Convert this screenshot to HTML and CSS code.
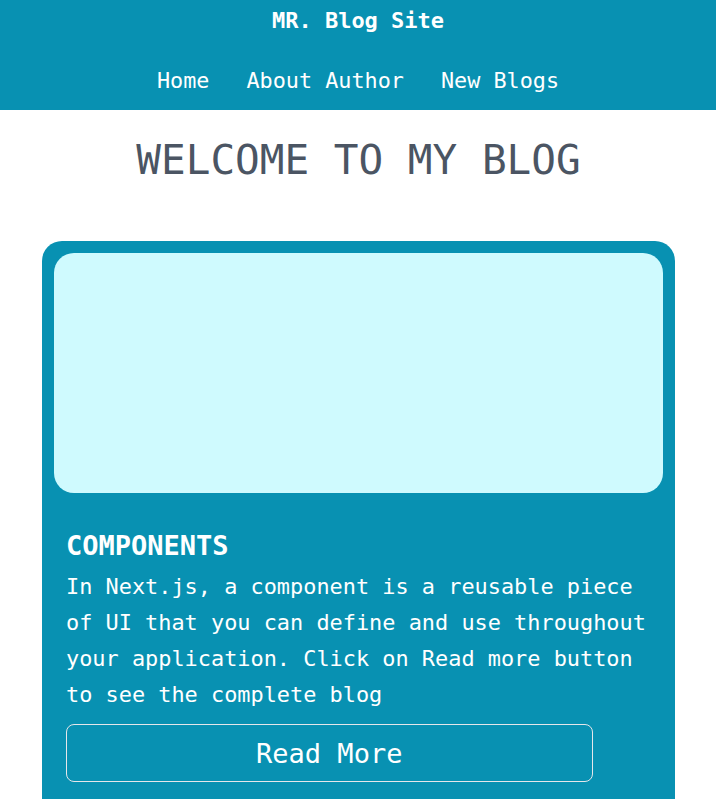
FILE: index.html
```html
<!DOCTYPE html>
<html lang="en">
<head>
<meta charset="utf-8">
<title>MR. Blog Site</title>
<link rel="stylesheet" href="styles.css">
</head>
<body>
<header class="site-header">
  <div class="brand">MR. Blog Site</div>
  <nav class="nav">
    <a class="nav-link" href="#">Home</a>
    <a class="nav-link" href="#">About Author</a>
    <a class="nav-link" href="#">New Blogs</a>
  </nav>
</header>
<main class="main">
  <h1 class="page-title">WELCOME TO MY BLOG</h1>
  <article class="card">
    <div class="card-image"></div>
    <div class="card-body">
      <h2 class="card-title">COMPONENTS</h2>
      <p class="card-text">In Next.js, a component is a reusable piece of UI that you can define and use throughout your application. Click on Read more button to see the complete blog</p>
      <button class="read-more">Read More</button>
    </div>
  </article>
</main>
</body>
</html>
```
FILE: styles.css
```css
* { box-sizing: border-box; }
html, body { margin: 0; padding: 0; }
body {
  font-family: "DejaVu Sans Mono", "Liberation Mono", monospace;
  background: #ffffff;
  color: #ffffff;
}
.site-header {
  background: #0891b2;
  padding-top: 1px;
  padding-bottom: 9px;
  text-align: center;
}
.brand {
  font-weight: bold;
  font-size: 22px;
  line-height: 40px;
}
.nav {
  margin-top: 20px;
  display: flex;
  justify-content: center;
  gap: 37px;
  line-height: 40px;
}
.nav-link {
  color: #ffffff;
  text-decoration: none;
  font-size: 21.8px;
}
.main {
  margin: 0 41px 0 42px;
}
.page-title {
  margin: 26px 0 0;
  text-align: center;
  font-weight: normal;
  font-size: 41px;
  line-height: 49px;
  color: #4b5563;
}
.card {
  margin-top: 56px;
  background: #0891b2;
  border-radius: 20px;
  padding: 12px 12px 40px;
}
.card-image {
  height: 240px;
  background: #cffafe;
  border-radius: 20px;
}
.card-body {
  padding: 0 12px;
}
.card-title {
  margin: 35px 0 0;
  font-size: 27px;
  line-height: 36px;
  font-weight: bold;
}
.card-text {
  margin: 5px 0 0;
  font-size: 21.9px;
  line-height: 36px;
}
.read-more {
  display: block;
  margin-top: 11px;
  width: 90%;
  height: 58px;
  background: transparent;
  border: 1px solid #e5e7eb;
  border-radius: 8px;
  color: #ffffff;
  font-family: inherit;
  font-size: 27px;
}
```
